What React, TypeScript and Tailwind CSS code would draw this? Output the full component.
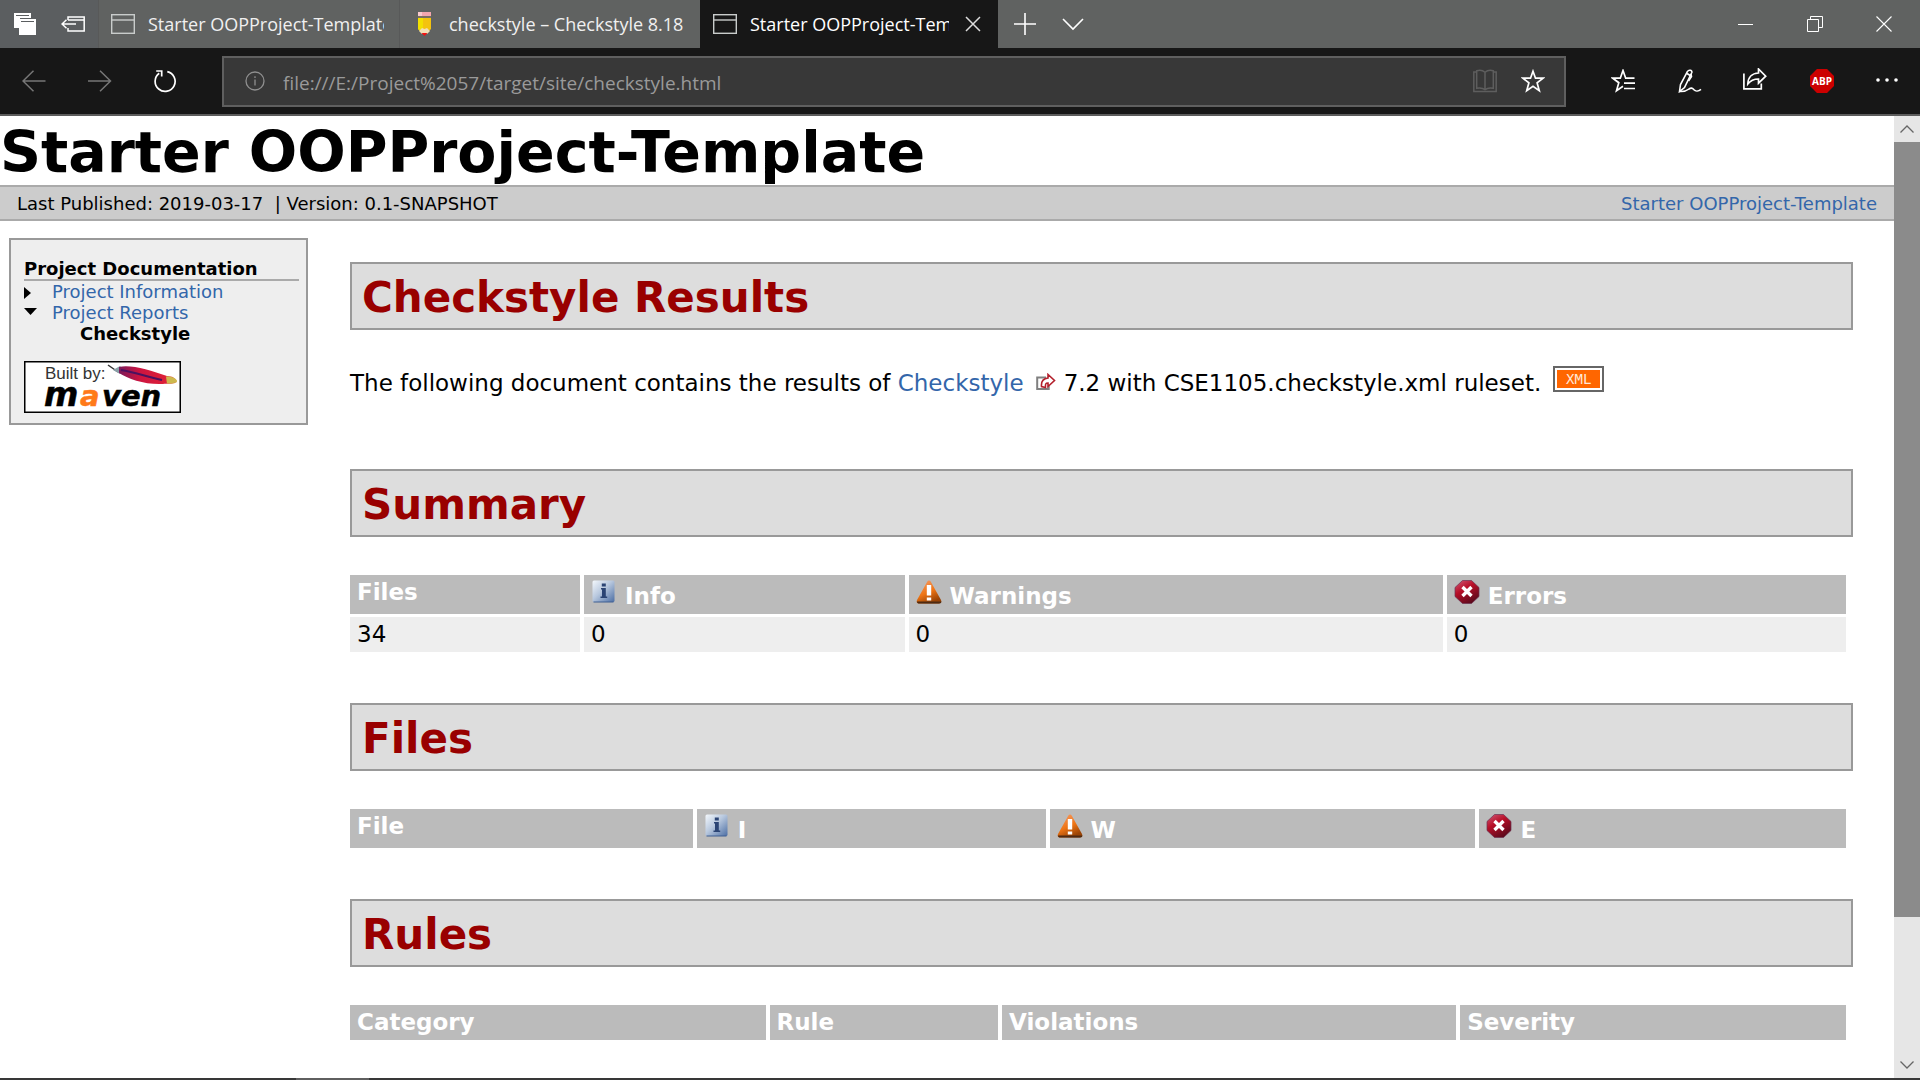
import type { ReactNode } from "react";

const LINK = "text-[#3366aa]";

function WindowIcon() {
  return (
    <svg width="24" height="20" viewBox="0 0 24 20" fill="none" stroke="#c9cccb" strokeWidth="1.4" className="shrink-0">
      <rect x="0.7" y="0.7" width="22.6" height="18.6" />
      <path d="M0 6h24" />
    </svg>
  );
}

function PencilIcon() {
  return (
    <svg width="13" height="24" viewBox="0 0 13 24" className="shrink-0">
      <rect x="0" y="0" width="13" height="4" fill="#f3a6ae" />
      <rect x="0" y="0" width="4" height="4" fill="#f8c9cd" />
      <rect x="0" y="4" width="13" height="2" fill="#7a6f62" />
      <path d="M0 6h13v11l-3 3h-7l-3-3z" fill="#f4c30e" />
      <path d="M0 6h5v14h-2l-3-3z" fill="#f2e000" />
      <path d="M1 19l3-3 2.500 1 2.500-1 3 3-3 3h-5z" fill="#f3dfb6" />
      <path d="M3.500 21h6l-3 3z" fill="#f21111" />
    </svg>
  );
}

function Tab({ icon, title, active }: { icon: ReactNode; title: string; active?: boolean }) {
  return (
    <div
      role="tab"
      aria-selected={!!active}
      className={
        active
          ? "flex w-[298px] items-center bg-[#171717] pl-[13px] text-white"
          : "flex w-[301px] items-center border-l border-[#585959] pl-3 text-[#f0f0f0]"
      }
    >
      <span className="flex w-6 shrink-0 justify-center">{icon}</span>
      <span
        className={
          active
            ? "ml-[13px] w-[199px] overflow-hidden whitespace-nowrap text-[18px] leading-[28px]"
            : "ml-[13px] w-[236px] overflow-hidden whitespace-nowrap text-[18px] leading-[28px]"
        }
      >
        {title}
      </span>
      {active && (
        <button aria-label="Close tab" className="ml-4">
          <svg width="16" height="16" viewBox="0 0 16 16" fill="none" stroke="#dcdcdc" strokeWidth="1.5">
            <path d="M1 1l14 14M15 1L1 15" />
          </svg>
        </button>
      )}
    </div>
  );
}

function TabStrip() {
  return (
    <div className="flex h-12 shrink-0 bg-[#606261]">
      <div className="flex w-[98px] shrink-0 items-center bg-[#5b5e60] pl-[14px]">
        <button aria-label="Tabs you've set aside">
          <svg width="22" height="22" viewBox="0 0 22 22">
            <path d="M0 0h17v5h-11v10h-6z" fill="#fff" />
            <path d="M2 2.500h13" stroke="#5b5e60" />
            <rect x="5" y="6" width="17" height="16" fill="#fff" />
            <path d="M7 8.500h13" stroke="#5b5e60" />
          </svg>
        </button>
        <button aria-label="Set these tabs aside" className="ml-[25px]">
          <svg width="24" height="18" viewBox="0 0 24 18" fill="none" stroke="#fff" strokeWidth="1.5">
            <path d="M7 5V2h16.200v14H7v-3M7 5h16" />
            <path d="M1 9h14M5.500 4.800L1 9l4.500 4.200" />
          </svg>
        </button>
      </div>
      <div role="tablist" className="flex">
        <Tab icon={<WindowIcon />} title="Starter OOPProject-Template" />
        <Tab icon={<PencilIcon />} title="checkstyle – Checkstyle 8.18" />
        <Tab icon={<WindowIcon />} title="Starter OOPProject-Template" active />
      </div>
      <button aria-label="New tab" className="ml-4">
        <svg width="22" height="22" viewBox="0 0 22 22" stroke="#fff" strokeWidth="1.6">
          <path d="M0 11h22M11 0v22" />
        </svg>
      </button>
      <button aria-label="Tab previews" className="ml-[26px]">
        <svg width="22" height="14" viewBox="0 0 22 14" fill="none" stroke="#fff" strokeWidth="1.6">
          <path d="M1 2l10 10L21 2" />
        </svg>
      </button>
      <div className="ml-auto flex items-center gap-[53px] pr-7">
        <button aria-label="Minimize">
          <svg width="16" height="16" viewBox="0 0 16 16" stroke="#fff">
            <path d="M0 8.500h15" />
          </svg>
        </button>
        <button aria-label="Restore">
          <svg width="16" height="16" viewBox="0 0 16 16" fill="none" stroke="#fff">
            <path d="M0.500 3.500h11v12h-11zM3.500 3v-2.500h12v11H12" />
          </svg>
        </button>
        <button aria-label="Close window">
          <svg width="16" height="16" viewBox="0 0 16 16" fill="none" stroke="#fff" strokeWidth="1.100">
            <path d="M0.500 0.500l15 15M15.500 0.500l-15 15" />
          </svg>
        </button>
      </div>
    </div>
  );
}

function NavBar() {
  return (
    <div className="flex h-[68px] shrink-0 items-center border-b-2 border-[#5c5c5c] bg-[#171717]">
      <div className="flex w-[222px] shrink-0 items-center pl-[22px]">
        <button aria-label="Back">
          <svg width="24" height="22" viewBox="0 0 24 22" fill="none" stroke="#777" strokeWidth="1.5">
            <path d="M23.500 11H1M11.500 0.700L1 11l10.500 10.300" />
          </svg>
        </button>
        <button aria-label="Forward" className="ml-[42px]">
          <svg width="24" height="22" viewBox="0 0 24 22" fill="none" stroke="#777" strokeWidth="1.5">
            <path d="M0 11h22.500M12 0.700L22.500 11L12 21.300" />
          </svg>
        </button>
        <button aria-label="Refresh" className="ml-[41px]">
          <svg width="24" height="24" viewBox="0 0 24 24" fill="none" stroke="#fff" strokeWidth="1.700">
            <path d="M14.300 2.600A10 10 0 1 1 6.200 4.300" />
            <path d="M3.200 2h5.500v5.500" />
          </svg>
        </button>
      </div>
      <div className="flex h-[51px] min-w-0 flex-1 items-center border-2 border-[#5f5f5f] bg-[#383838] pl-[21px] pr-[19px]">
        <svg width="20" height="20" viewBox="0 0 20 20" fill="none" stroke="#8f8f8f" strokeWidth="1.300" className="shrink-0">
          <circle cx="10" cy="10" r="9" />
          <path d="M10 8.500v6M10 5.300v1.700" />
        </svg>
        <input
          aria-label="Address"
          readOnly
          value="file:///E:/Project%2057/target/site/checkstyle.html"
          className="ml-[18px] min-w-0 flex-1 bg-transparent pt-1 text-[19px] leading-[28px] text-[#9a9a9a] outline-none"
        />
        <button aria-label="Reading view">
          <svg width="24" height="24" viewBox="0 0 24 24" fill="none" stroke="#5e5e5e" strokeWidth="1.500">
            <path d="M3.500 3H0.800v19.500h22.400V3H20.500" />
            <path d="M12 3.200C9.500 1 6 1 3.700 1.700v17.600c2.800-0.600 6-0.400 8.300 1.400c2.300-1.800 5.500-2 8.300-1.400V1.700C18 1 14.500 1 12 3.200v17.500" />
          </svg>
        </button>
        <button aria-label="Add to favorites" className="ml-6">
          <svg width="24" height="24" viewBox="0 0 24 24" fill="none" stroke="#fff" strokeWidth="1.700">
            <path d="M12 2.200l2.500 7h7.600l-6 4.600l2.200 7.900L12 17.200l-6.300 4.500l2.200-7.900l-6-4.600h7.600z" />
          </svg>
        </button>
      </div>
      <div className="flex shrink-0 items-center pl-[45px] pr-[21px]">
        <button aria-label="Favorites">
          <svg width="24" height="24" viewBox="0 0 24 24" fill="none" stroke="#fff" strokeWidth="1.700">
            <path d="M23.500 9.200h-8.800L12 1.500L9.300 9.200H1.800l6 4.500l-2.300 8L12 17.300" />
            <path d="M13 14.200h11M13 19.500h11" />
          </svg>
        </button>
        <button aria-label="Add notes" className="ml-[43px]">
          <svg width="24" height="24" viewBox="0 0 24 24" fill="none" stroke="#fff" strokeWidth="1.600">
            <path d="M1.500 22.500L2.500 15.500L9.500 2.500C10.500 0.500 14.500 0.800 13.800 3.500L6.500 18.500z" />
            <path d="M9 4.500l4 2.500M13 5l0.500 2.500L10.500 12" />
            <path d="M1.500 22.500c4 0.300 7-0.500 9.500-2.500c2-1.500 3.500-1.200 5 0.800c1.500 1.800 4.500 1.500 7-0.500" />
          </svg>
        </button>
        <button aria-label="Share" className="mb-1 ml-[41px]">
          <svg width="24" height="22" viewBox="0 0 24 22" fill="none" stroke="#fff" strokeWidth="1.700">
            <path d="M0.900 5.500v15.300h17.400V15.500" />
            <path d="M4.800 16C5 9.500 9 5.300 15.500 5V1l7.200 7.200l-7.200 7V11C11 11 7.500 12.500 4.800 16z" />
          </svg>
        </button>
        <button
          aria-label="Adblock Plus"
          className="ml-[43px] flex size-6 items-center justify-center bg-[#cc0000] text-[10px] leading-[24px] font-bold text-white [clip-path:polygon(29%_0,71%_0,100%_29%,100%_71%,71%_100%,29%_100%,0_71%,0_29%)]"
        >
          ABP
        </button>
        <button aria-label="Settings and more" className="mb-[2px] ml-[41px]">
          <svg width="24" height="6" viewBox="0 0 24 6" fill="#fff">
            <circle cx="3" cy="3" r="1.800" />
            <circle cx="12" cy="3" r="1.800" />
            <circle cx="21" cy="3" r="1.800" />
          </svg>
        </button>
      </div>
    </div>
  );
}

function MavenBadge() {
  return (
    <a href="#maven" aria-label="Built by Maven" className="mt-[17px] block w-[157px]">
      <svg width="157" height="52" viewBox="0 0 157 52">
        <defs>
          <linearGradient id="feather" x1="0" x2="1">
            <stop offset="0" stopColor="#7a1a5a" />
            <stop offset="0.35" stopColor="#cc1440" />
            <stop offset="0.8" stopColor="#dd2038" />
            <stop offset="1" stopColor="#d8b04a" />
          </linearGradient>
        </defs>
        <rect x="0.750" y="0.750" width="155.500" height="50.500" fill="#fff" stroke="#000" strokeWidth="1.500" />
        <text x="21" y="18" fontFamily="Liberation Sans" fontSize="17" fill="#333">
          Built by:
        </text>
        <g fontFamily="DejaVu Sans" fontWeight="bold" fontStyle="italic" strokeWidth="0.500">
          <text x="20" y="45" fontSize="33" fill="#000" stroke="#000">
            m
          </text>
          <text x="56" y="45" fontSize="29" fill="#ff7a1a" stroke="#ff7a1a">
            a
          </text>
          <text x="78" y="45" fontSize="29" fill="#000" stroke="#000">
            ven
          </text>
        </g>
        <path d="M84 4l10 7" stroke="#333" strokeWidth="1.500" />
        <path d="M89 9l7-4l4 4l-4 4z" fill="#8aa0a8" />
        <path d="M95 6C106 3 126 9 143 15C149 15 153 18 153 21C148 24 143 22 139 23C122 24 104 18 95 12z" fill="url(#feather)" />
        <path d="M97 9C110 11 124 16 138 19" stroke="#4a1260" strokeWidth="2" fill="none" />
        <path d="M142 15.500c6 0 10 2 11 4.500c-3 3-7 2.500-10 2.500z" fill="#cdb94e" />
      </svg>
    </a>
  );
}

function Sidebar() {
  return (
    <nav className="mt-[17px] ml-[9px] w-[299px] shrink-0 self-start border-2 border-[#999] bg-[#eee] pt-[18px] pr-[7px] pb-[10px] pl-[13px] text-[18px] leading-[21px]">
      <h5 className="border-b-2 border-[#aaa] font-bold">Project Documentation</h5>
      <ul>
        <li className="flex items-center">
          <svg width="28" height="16" viewBox="0 0 28 16">
            <path d="M0 3l7 6l-7 6z" />
          </svg>
          <a href="#info" className={LINK}>Project Information</a>
        </li>
        <li>
          <div className="flex items-center">
            <svg width="28" height="14" viewBox="0 0 28 14">
              <path d="M0 2h13l-6.500 7z" />
            </svg>
            <a href="#reports" className={LINK}>Project Reports</a>
          </div>
          <strong className="block pl-14">Checkstyle</strong>
        </li>
      </ul>
      <MavenBadge />
    </nav>
  );
}

function InfoIcon() {
  return (
    <svg width="26" height="24" viewBox="0 0 26 24" className="mt-0.5 mr-2 inline-block align-baseline">
      <defs>
        <linearGradient id="info" x1="0" y1="0" x2="1" y2="1">
          <stop offset="0" stopColor="#f4f8fc" />
          <stop offset="0.45" stopColor="#b8c8de" />
          <stop offset="1" stopColor="#4c6ea4" />
        </linearGradient>
      </defs>
      <rect x="1.500" y="0.500" width="22" height="21.500" rx="1.500" fill="url(#info)" />
      <path d="M2.500 22h20" stroke="#3f5f92" />
      <path d="M10.800 3.500h4v3h-4zM10 8h4.800v8.500h1.400v1.500H9.500v-1.500h1.500V9.500H10z" fill="#2b4474" />
    </svg>
  );
}

function WarningIcon() {
  return (
    <svg width="26" height="24" viewBox="0 0 26 24" className="mt-0.5 mr-2 inline-block align-baseline">
      <defs>
        <linearGradient id="warn" x1="0" y1="0" x2="0.500" y2="1">
          <stop offset="0" stopColor="#f6a070" />
          <stop offset="0.600" stopColor="#ee7414" />
          <stop offset="1" stopColor="#9a4406" />
        </linearGradient>
      </defs>
      <path d="M13 0.500C14.500 0.500 15 2 15.500 3L25 20C26 22 25 23.500 23 23.500H3C1 23.500 0 22 1 20L10.500 3C11 2 11.500 0.500 13 0.500z" fill="url(#warn)" />
      <path d="M1 21.500C1 23 2 23.500 3 23.500H23C24.500 23.500 25.500 22.500 25.300 21.500z" fill="#4e2a12" />
      <path d="M10.800 5h4.400v10.500h-4.400zM10.800 17.500h4.400v3h-4.400z" fill="#fff" />
    </svg>
  );
}

function ErrorIcon() {
  return (
    <svg width="26" height="24" viewBox="0 0 26 24" className="mt-0.5 mr-2 inline-block align-baseline">
      <defs>
        <linearGradient id="err" x1="0" y1="0" x2="0.600" y2="1">
          <stop offset="0" stopColor="#cf5a78" />
          <stop offset="0.450" stopColor="#b80f28" />
          <stop offset="1" stopColor="#5e0a1c" />
        </linearGradient>
      </defs>
      <path d="M8.500 0.500h9l7.500 7v9l-7.500 7h-9l-7.500-7v-9z" fill="url(#err)" stroke="#6b3050" strokeWidth="0.700" />
      <path d="M8.500 7l9 9M17.500 7l-9 9" stroke="#fff" strokeWidth="3.400" />
    </svg>
  );
}

function Section({ title, children }: { title: string; children: ReactNode }) {
  return (
    <section>
      <h2 className="border-2 border-[#999] bg-[#ddd] pt-1 pl-[10px] text-[42px] leading-[60px] font-bold text-[#990000]">{title}</h2>
      {children}
    </section>
  );
}

type Column = { label: string; width: string; icon?: ReactNode };

function DataTable({ columns, rows = [] }: { columns: Column[]; rows?: string[][] }) {
  return (
    <div className="-ml-1 pt-[35px] pr-[3px]">
      <table className="w-full table-fixed border-separate border-spacing-x-1 border-spacing-y-[3px] text-[23px] leading-[29px]">
        <colgroup>
          {columns.map((c) => (
            <col key={c.label} style={{ width: c.width }} />
          ))}
        </colgroup>
        <thead>
          <tr>
            {columns.map((c) => (
              <th key={c.label} scope="col" className="bg-[#bbb] px-[7px] py-[3px] text-left align-top font-bold text-white">
                {c.icon}
                {c.label}
              </th>
            ))}
          </tr>
        </thead>
        <tbody>
          {rows.map((r, i) => (
            <tr key={i}>
              {r.map((v, j) => (
                <td key={j} className="bg-[#eee] px-[7px] py-[3px]">{v}</td>
              ))}
            </tr>
          ))}
        </tbody>
      </table>
    </div>
  );
}

function ExternalIcon() {
  return (
    <svg width="20" height="18" viewBox="0 0 20 18" fill="none" className="mr-2 ml-3 inline-block align-baseline">
      <path d="M10 4.500H1.200v11.500h11.500V13" stroke="#808080" strokeWidth="2" />
      <path d="M5.500 13.500C5 8.500 7.500 5.500 12 5V1.500l6.500 6l-6.500 6V10C9 10 9.500 12 9.500 14.500z" stroke="#b3202c" strokeWidth="1.600" fill="#fff" />
    </svg>
  );
}

function Page() {
  return (
    <div className="min-w-0 flex-1 overflow-hidden bg-white text-black">
      <h1 className="pt-1 text-[57px] leading-[65px] font-bold whitespace-nowrap">Starter OOPProject-Template</h1>
      <div className="flex justify-between border-y-2 border-[#aaa] bg-[#ccc] px-[17px] pt-0.5 text-[18px] leading-[30px]">
        <div>
          Last Published: 2019-03-17 &nbsp;| Version: 0.1-SNAPSHOT
        </div>
        <a href="#home" className={LINK}>Starter OOPProject-Template</a>
      </div>
      <div className="flex">
        <Sidebar />
        <main className="mt-[41px] mr-[41px] ml-[42px] flex min-w-0 flex-1 flex-col">
          <Section title="Checkstyle Results">
            <p className="flex items-center pt-9 pb-[69px] text-[23px] leading-[32px] whitespace-nowrap">
              <span>
                The following document contains the results of <a href="#checkstyle" className={LINK}>Checkstyle</a>
                <ExternalIcon />
                7.2 with CSE1105.checkstyle.xml ruleset.
              </span>
              <a
                href="#rss"
                className="mb-2 ml-3 flex h-[26px] w-[51px] items-center justify-center border-2 border-[#666] bg-[#ff6600] font-['DejaVu_Sans_Mono',monospace] text-[14px] text-[#ffe8d8] shadow-[inset_0_0_0_2px_#fff]"
              >
                XML
              </a>
            </p>
          </Section>
          <Section title="Summary">
            <DataTable
              columns={[
                { label: "Files", width: "15.5%" },
                { label: "Info", width: "21.6%", icon: <InfoIcon /> },
                { label: "Warnings", width: "36%", icon: <WarningIcon /> },
                { label: "Errors", width: "26.9%", icon: <ErrorIcon /> },
              ]}
              rows={[["34", "0", "0", "0"]]}
            />
          </Section>
          <div className="h-12" />
          <Section title="Files">
            <DataTable
              columns={[
                { label: "File", width: "23.1%" },
                { label: "I", width: "23.5%", icon: <InfoIcon /> },
                { label: "W", width: "28.7%", icon: <WarningIcon /> },
                { label: "E", width: "24.7%", icon: <ErrorIcon /> },
              ]}
            />
          </Section>
          <div className="h-12" />
          <Section title="Rules">
            <DataTable
              columns={[
                { label: "Category", width: "28%" },
                { label: "Rule", width: "15.4%" },
                { label: "Violations", width: "30.6%" },
                { label: "Severity", width: "26%" },
              ]}
            />
          </Section>
        </main>
      </div>
    </div>
  );
}

function Scrollbar() {
  return (
    <div className="flex w-[26px] shrink-0 flex-col bg-[#e6e6e6]">
      <button aria-label="Scroll up" className="flex h-[26px] items-center justify-center">
        <svg width="14" height="8" viewBox="0 0 14 8" fill="none" stroke="#666" strokeWidth="1.300">
          <path d="M0.500 7.500L7 1l6.500 6.500" />
        </svg>
      </button>
      <div className="flex-[775] bg-[#8b8b8b]" />
      <div className="flex-[135]" />
      <button aria-label="Scroll down" className="flex h-[26px] items-center justify-center">
        <svg width="14" height="8" viewBox="0 0 14 8" fill="none" stroke="#666" strokeWidth="1.300">
          <path d="M0.500 0.500L7 7l6.500-6.500" />
        </svg>
      </button>
    </div>
  );
}

export default function App() {
  return (
    <div className="flex h-screen flex-col overflow-hidden font-['DejaVu_Sans',sans-serif]">
      <header className="font-['Open_Sans','Noto_Sans',sans-serif]">
        <TabStrip />
        <NavBar />
      </header>
      <div className="flex min-h-0 flex-1">
        <Page />
        <Scrollbar />
      </div>
      <div className="flex h-[2px] shrink-0 bg-[#383838]">
        <div className="ml-[296px] w-[73px] bg-[#5f5f5f]" />
      </div>
    </div>
  );
}
